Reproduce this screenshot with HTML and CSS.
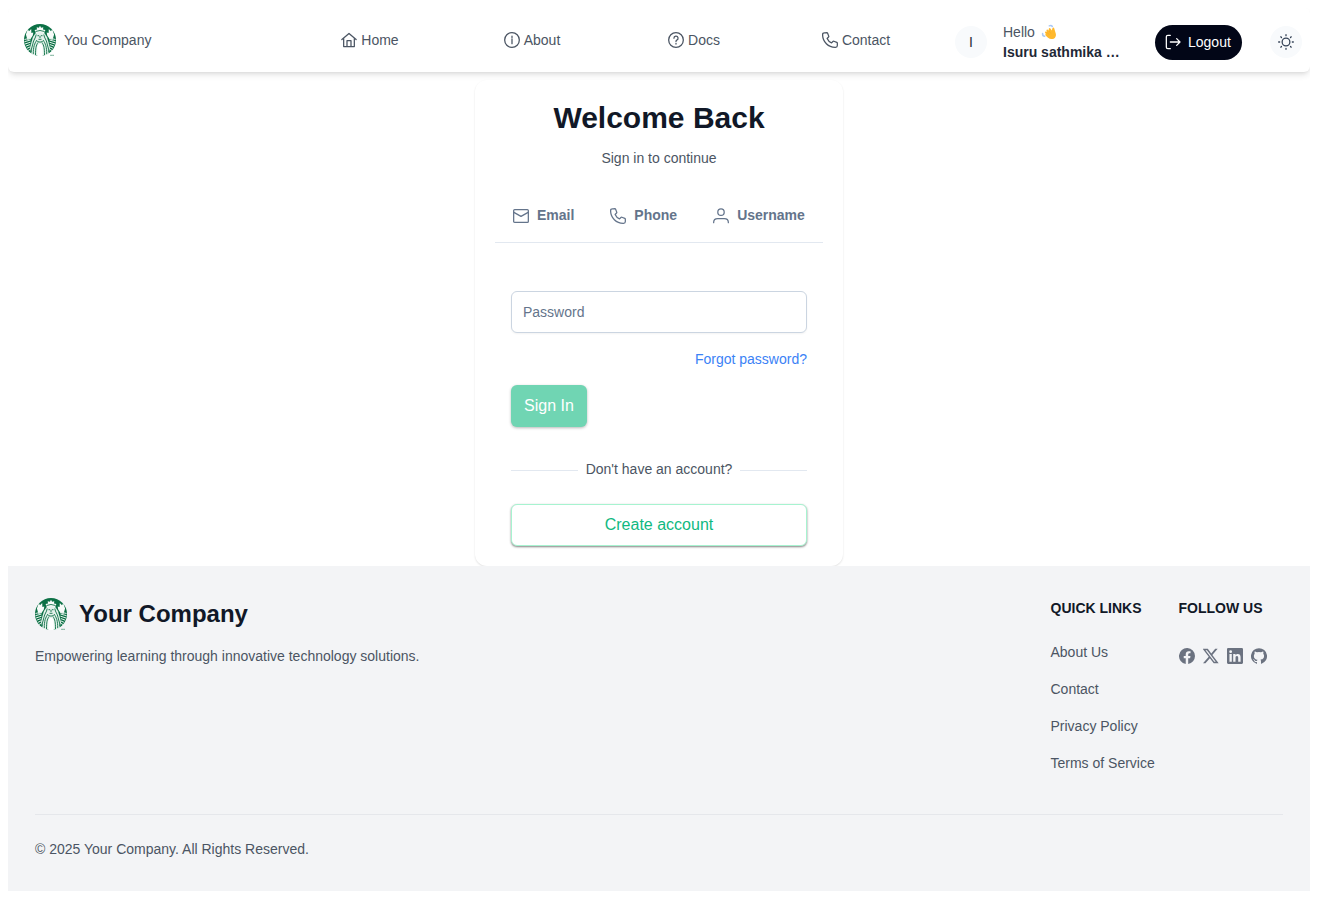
FILE: index.html
```html
<!DOCTYPE html>
<html lang="en">
<head>
<meta charset="utf-8">
<title>Your Company</title>
<link rel="stylesheet" href="styles.css">
</head>
<body>
<svg class="sprite" aria-hidden="true">
  <symbol id="logo" viewBox="0 0 32 32">
    <circle cx="16" cy="16" r="16" fill="#0b7045"/>
    <path fill="#f7fbf9" d="M16 1.800l1.100 2 2.200-.6-.3 2.300 2.400.5-1.200 3H11.800l-1.200-3 2.400-.5-.3-2.300 2.200.6z"/>
    <path fill="#e4f1eb" d="M11.500 9.300q4.500-2 9 0l2.500 4 1.500 5 1.500 6-1.500 6q-8.500 3-17 0L6 24l1.500-6 1.500-5z"/>
    <path fill="#f7fbf9" d="M1.900 10.500l1.900-5.300 1.200 2 2.200-2.200.2 3.900 1.900-.5-.5 3.200-2.300 3.300-3 1zM30.100 10.500l-1.900-5.300-1.200 2-2.200-2.200-.2 3.900-1.900-.5.500 3.200 2.300 3.300 3 1z"/>
    <g fill="none" stroke="#e4f1eb" stroke-width="1">
      <path d="M.5 15.500l6-1.500M.5 17.700l6-1.700M1 20l5.500-1.800M1.700 22.200l4.500-1.700M2.800 24.400l3.500-1.600M4 26.500l2.500-1.400M31.500 15.500l-6-1.500M31.500 17.700l-6-1.700M31 20l-5.500-1.800M30.300 22.200l-4.500-1.700M29.200 24.400l-3.500-1.600M28 26.500l-2.500-1.400"/>
    </g>
    <g fill="none" stroke="#0b7045" stroke-width=".9">
      <path d="M11.500 7.500q4.500-2 9 0M12.200 10.500c-.6 4-2.600 5-3.300 9s-2 5-1.600 9M13 16c-2.500 3.500-3.800 7-3.700 14M14 18.500c-2 3-2.500 6-2.500 12.500M19.800 10.500c.6 4 2.600 5 3.300 9s2 5 1.600 9M19 16c2.500 3.500 3.800 7 3.700 14M18 18.500c2 3 2.500 6 2.500 12.500"/>
      <path d="M13.500 11.700h1.700M16.800 11.700h1.700M16 12v2M14.500 15.300h3M13.300 17.500q2.700 1.300 5.400 0"/>
    </g>
    <path fill="#fff" d="M13.300 22q2.700-4.500 5.400 0v10h-5.400z"/>
    <path stroke="#0b7045" stroke-width=".7" d="M26.300 31.300h1.500M28.300 31.300h1.500"/>
  </symbol>
  <symbol id="home" viewBox="0 0 24 24"><path d="M1.300 11.400L12 2.200l10.700 9.200M4 9.500V21.800h16V9.500M9 21.500V13h6v8.500"/></symbol>
  <symbol id="info" viewBox="0 0 24 24"><circle cx="12" cy="12" r="11"/><path d="M12 10.500v7M12 6.300v2"/></symbol>
  <symbol id="help" viewBox="0 0 24 24"><circle cx="12" cy="12" r="11"/><path d="M8.900 9.300a3.100 3.100 0 1 1 4.300 2.900q-1.200.6-1.200 2.200M12 17v1"/></symbol>
  <symbol id="phone" viewBox="0 0 24 24"><path d="M4.500 1.300L7.300 1q.8 0 1.100.8l1.700 4.400q.3.800-.3 1.400L7.700 9.700q2 4.600 6.600 6.600l2.100-2.100q.6-.6 1.400-.3l4.400 1.700q.8.300.8 1.100v3.500q0 2.700-2.700 2.700C9.500 23.200.9 14.600.9 4q0-2.700 2.700-2.700z"/></symbol>
  <symbol id="mail" viewBox="0 0 24 24"><rect x="1" y="2.300" width="22" height="19.400" rx="1.500"/><path d="M1.300 6.500L12 12.500l10.700-6"/></symbol>
  <symbol id="user" viewBox="0 0 24 24"><circle cx="12" cy="6.200" r="4.800"/><path d="M1 22v-.8q0-5.400 6-5.400h10q6 0 6 5.400v.8"/></symbol>
  <symbol id="logout" viewBox="0 0 24 24"><path d="M8 2H4.200Q2 2 2 4.200v15.600Q2 22 4.200 22H8M8 12H22.500M17.500 7l5 5-5 5"/></symbol>
  <symbol id="sun" viewBox="0 0 24 24"><circle cx="12" cy="12" r="5.800"/><path d="M12 1v1.500M12 21.500V23M1 12h1.500M21.500 12H23M4.200 4.200l1 1M18.800 18.800l1 1M4.200 19.800l1-1M18.800 5.200l1-1"/></symbol>
  <symbol id="facebook" viewBox="0 0 24 24"><path d="M24 12A12 12 0 1 0 10.100 23.900v-8.400H7.100V12h3V9.400c0-3 1.800-4.700 4.500-4.700 1.300 0 2.700.2 2.700.2v3h-1.500c-1.500 0-2 .9-2 1.900V12h3.400l-.5 3.500h-2.900v8.400A12 12 0 0 0 24 12z"/></symbol>
  <symbol id="x" viewBox="0 0 24 24"><path fill-rule="evenodd" d="M18.300 1.200h3.700l-8 9.200 9.500 12.500h-7.400l-5.800-7.600-6.600 7.600H0l8.600-9.800L-.4 1.200h7.600l5.200 6.900zm-1.300 19.500h2L5.900 3.300H3.700z"/></symbol>
  <symbol id="linkedin" viewBox="0 0 24 24"><path fill-rule="evenodd" d="M1.700 0h20.600Q24 0 24 1.700v20.600q0 1.700-1.700 1.700H1.700Q0 24 0 22.300V1.700Q0 0 1.700 0zM3.700 9.100v11.400h3.500V9.100zM5.400 3.400a2.100 2.100 0 1 0 .1 4.200 2.100 2.100 0 0 0-.1-4.200zM9.300 9.100v11.400h3.500v-5.600c0-1.500.3-2.900 2.100-2.900s1.900 1.700 1.900 3v5.500h3.600v-6.200c0-3.100-.7-5.400-4.300-5.400-1.700 0-2.800.9-3.300 1.800V9.100z"/></symbol>
  <symbol id="github" viewBox="0 0 24 24"><path d="M12 .3a12 12 0 0 0-3.800 23.400c.6.100.8-.3.800-.6v-2c-3.300.7-4-1.600-4-1.600-.6-1.400-1.400-1.800-1.400-1.800-1-.7.100-.7.100-.7 1.200 0 1.900 1.200 1.900 1.200 1 1.800 2.800 1.300 3.500 1 0-.8.400-1.300.7-1.600-2.700-.3-5.500-1.300-5.500-6 0-1.200.5-2.300 1.300-3.100-.2-.4-.6-1.600 0-3.200 0 0 1-.3 3.400 1.200a11.500 11.500 0 0 1 6 0c2.300-1.500 3.300-1.200 3.300-1.200.6 1.600.2 2.800 0 3.200.9.800 1.300 1.900 1.300 3.200 0 4.600-2.800 5.600-5.500 5.900.5.400.9 1 .9 2.200v3.300c0 .3.100.7.800.6A12 12 0 0 0 12 .3z"/></symbol>
</svg>

<header class="topbar">
  <a class="brand"><svg class="logo"><use href="#logo"/></svg><span>You Company</span></a>
  <nav class="nav">
    <a><svg class="icon"><use href="#home"/></svg>Home</a>
    <a><svg class="icon"><use href="#info"/></svg>About</a>
    <a><svg class="icon"><use href="#help"/></svg>Docs</a>
    <a><svg class="icon"><use href="#phone"/></svg>Contact</a>
  </nav>
  <div class="account">
    <span class="avatar">I</span>
    <div class="greeting">
      <div class="hello">Hello
        <svg class="wave" viewBox="0 0 16 16"><g fill="none" stroke="#a9c8f5" stroke-width="1.500" stroke-linecap="round"><path d="M8.300 1.800q2-1 3 .7M1.600 9.500q-.2 2.500 2 2.800"/></g><path fill="#ffb92e" d="M4.600 11.600q-.9-1 .2-1.500L4 8.600q-.2-1.200 1-1.100l.8.600-.4-1.900q.4-1.200 1.500-.4l.7.900.2-2q.8-1.200 1.800 0l1.200 1.900.7-2.700q1.100-1.100 1.700.3L14.900 10q.4 3.300-2.200 4.700-3.300 1.200-5.700-1z"/><path fill="none" stroke="#f0a020" stroke-width=".5" d="M5.900 8.300l2.300 2.400M7.700 6.800l2.200 2.700"/></svg>
      </div>
      <div class="name">Isuru sathmika …</div>
    </div>
    <button class="logout"><svg class="icon"><use href="#logout"/></svg>Logout</button>
    <button class="theme"><svg class="icon"><use href="#sun"/></svg></button>
  </div>
</header>

<main class="card">
  <h1>Welcome Back</h1>
  <p class="subtitle">Sign in to continue</p>
  <div class="tabs">
    <a><svg class="icon"><use href="#mail"/></svg>Email</a>
    <a><svg class="icon"><use href="#phone"/></svg>Phone</a>
    <a><svg class="icon"><use href="#user"/></svg>Username</a>
  </div>
  <form class="form">
    <input type="password" placeholder="Password">
    <a class="forgot">Forgot password?</a>
    <button type="button" class="signin">Sign In</button>
    <div class="divider"><span>Don't have an account?</span></div>
    <button type="button" class="create">Create account</button>
  </form>
</main>

<footer class="footer">
  <div class="footer-top">
    <section class="about">
      <h2><svg class="logo"><use href="#logo"/></svg>Your Company</h2>
      <p>Empowering learning through innovative technology solutions.</p>
    </section>
    <section class="links">
      <h3>QUICK LINKS</h3>
      <a>About Us</a><a>Contact</a><a>Privacy Policy</a><a>Terms of Service</a>
    </section>
    <section class="follow">
      <h3>FOLLOW US</h3>
      <div class="social">
        <svg><use href="#facebook"/></svg><svg><use href="#x"/></svg><svg><use href="#linkedin"/></svg><svg><use href="#github"/></svg>
      </div>
    </section>
  </div>
  <p class="copyright">© 2025 Your Company. All Rights Reserved.</p>
</footer>
</body>
</html>
```
FILE: styles.css
```css
* { box-sizing: border-box; }
body { margin: 8px; background: #fff; color: #4b5563; font: 14px/20px "Liberation Sans", Arial, sans-serif; }
h1, h2, h3, p { margin: 0; }
button, input { font-family: inherit; }
.sprite { display: none; }
.icon { width: 16px; height: 16px; flex: none; fill: none; stroke: currentColor; stroke-width: 1.9; stroke-linejoin: round; stroke-linecap: round; }
.logo { width: 32px; height: 32px; flex: none; }

.topbar { display: flex; height: 64px; border-radius: 6px; background: #fff; box-shadow: 0 4px 6px -1px rgba(0,0,0,.1), 0 2px 4px -2px rgba(0,0,0,.1); }
.brand { display: flex; align-items: center; gap: 8px; width: 281px; padding-left: 16px; }
.nav { display: grid; grid-template-columns: repeat(4, 162px); }
.nav a { display: flex; align-items: center; justify-content: center; gap: 4px; }
.account { display: flex; align-items: center; padding: 4px 0 0 18px; }
.avatar { display: flex; align-items: center; justify-content: center; width: 32px; height: 32px; border-radius: 50%; background: #f8fafc; color: #1e293b; }
.greeting { width: 152px; padding-left: 16px; margin-right: 16px; }
.hello { display: flex; gap: 6px; align-items: center; }
.wave { width: 16px; height: 16px; }
.name { color: #1f2937; font-weight: 700; white-space: nowrap; }
.logout { display: flex; align-items: center; gap: 7px; width: 87px; height: 35px; padding: 0 10px; border: 0; border-radius: 18px; background: #020617; color: #fff; font-size: 14px; }
.theme { display: flex; align-items: center; justify-content: center; width: 32px; height: 32px; margin-left: 28px; padding: 0; border: 0; border-radius: 50%; background: #f8fafc; color: #334155; }

.card { width: 368px; height: 486px; margin: 8px auto 0; padding: 20px; border-radius: 12px; background: #fff; box-shadow: 0 1px 2px rgba(0,0,0,.12); }
h1 { color: #111827; font-size: 30px; line-height: 36px; text-align: center; }
.subtitle { margin-top: 12px; text-align: center; }
.tabs { display: flex; height: 55px; margin-top: 20px; border-bottom: 1px solid #e2e8f0; color: #64748b; font-weight: 700; }
.tabs a { display: flex; align-items: center; gap: 8px; padding: 0 18px; }
.tabs .icon { margin-top: 1px; }
.form { display: flex; flex-direction: column; padding: 48px 16px 0; }
.form input { height: 42px; padding: 0 11px; border: 1px solid #cbd5e1; border-radius: 6px; font-size: 14px; box-shadow: 0 1px 2px rgba(18,18,23,.05); }
.form input::placeholder { color: #64748b; }
.forgot { margin-top: 16px; align-self: flex-end; color: #3b82f6; }
.signin, .create { height: 42px; border-radius: 6px; font-size: 16px; }
.signin { width: 76px; margin-top: 16px; padding: 0; border: 0; background: #70d5b3; color: #fff; box-shadow: 0 1px 3px rgba(0,0,0,.28); }
.divider { display: flex; align-items: center; gap: 8px; margin-top: 32px; }
.divider::before, .divider::after { content: ""; flex: 1; height: 1px; margin-top: 2px; background: #e2e8f0; }
.create { margin-top: 25px; border: 1px solid #a7f3d0; background: #fff; color: #10b981; box-shadow: 0 1px 2px rgba(0,0,0,.4), 0 1px 3px rgba(0,0,0,.12); }

.footer { position: relative; height: 325px; padding: 32px 27px 0; background: #f3f4f6; }
.footer-top { display: flex; height: 217px; border-bottom: 1px solid #e5e7eb; }
.about { width: 1015.500px; }
.about h2 { display: flex; align-items: center; gap: 12px; color: #111827; font-size: 24px; line-height: 32px; }
.about p { margin-top: 16px; }
.links { display: flex; flex-direction: column; gap: 17px; width: 128px; }
h3 { color: #111827; font-size: 14px; line-height: 20px; }
.links h3 { margin-bottom: 7px; }
.social { display: flex; gap: 8px; margin-top: 30px; }
.social svg { width: 16px; height: 16px; fill: #6b7280; }
.copyright { margin-top: 24px; }
```
